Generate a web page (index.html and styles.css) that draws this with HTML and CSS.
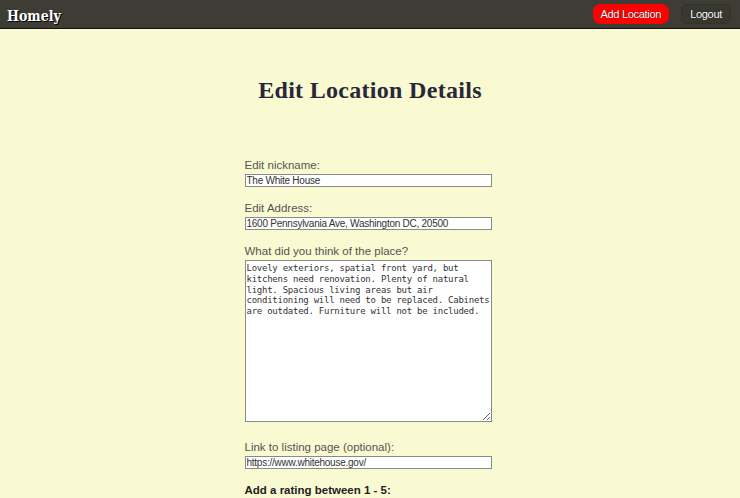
FILE: index.html
```html
<!DOCTYPE html>
<html>
<head>
<meta charset="utf-8">
<link rel="stylesheet" href="styles.css">
</head>
<body>
<header class="topbar">
  <div class="brand">Homely</div>
  <nav class="actions">
    <a class="btn btn-add">Add Location</a>
    <a class="btn btn-logout">Logout</a>
  </nav>
</header>
<main class="page">
  <h1 class="title">Edit Location Details</h1>
  <form class="form">
    <div class="field">
      <label class="label">Edit nickname:</label>
      <input class="input" type="text" value="The White House">
    </div>
    <div class="field">
      <label class="label">Edit Address:</label>
      <input class="input" type="text" value="1600 Pennsylvania Ave, Washington DC, 20500">
    </div>
    <div class="field">
      <label class="label">What did you think of the place?</label>
      <textarea class="textarea">Lovely exteriors, spatial front yard, but kitchens need renovation. Plenty of natural light. Spacious living areas but air conditioning will need to be replaced. Cabinets are outdated. Furniture will not be included.</textarea>
    </div>
    <div class="field">
      <label class="label">Link to listing page (optional):</label>
      <input class="input" type="text" value="https://www.whitehouse.gov/">
    </div>
    <div class="field">
      <label class="label label-bold">Add a rating between 1 - 5:</label>
    </div>
  </form>
</main>
</body>
</html>
```
FILE: styles.css
```css
html, body {
  margin: 0;
  padding: 0;
}
body {
  background: #f9f9d2;
  font-family: "Liberation Sans", Arial, sans-serif;
}
.topbar {
  height: 28px;
  background: #3e3d35;
  border-bottom: 1px solid #111;
  display: flex;
  align-items: center;
  justify-content: space-between;
  padding: 0 9px 0 7px;
}
.brand {
  font-family: "DejaVu Serif", serif;
  font-stretch: condensed;
  font-weight: bold;
  font-size: 14px;
  color: #fff;
  text-shadow: 1px 1px 0 #000;
  padding-top: 4px;
}
.actions {
  display: flex;
  gap: 12px;
  align-items: center;
}
.btn {
  font-size: 11px;
  letter-spacing: -0.3px;
  color: #fff;
  height: 20px;
  line-height: 20px;
  padding: 0 8px;
  border-radius: 8px;
  text-shadow: 0 0 1px #000;
}
.btn-add {
  background: #ff0000;
}
.btn-logout {
  background: #393830;
  border: 1px solid #33322b;
  height: 18px;
  line-height: 18px;
  border-radius: 6px;
}
.page {
  display: flex;
  flex-direction: column;
  align-items: center;
}
.title {
  font-family: "Liberation Serif", serif;
  font-weight: bold;
  font-size: 24px;
  color: #28283a;
  margin: 48px 0 0 0;
  letter-spacing: 0.3px;
}
.form {
  width: 247px;
  margin-top: 55px;
  margin-left: -4px;
  display: flex;
  flex-direction: column;
  gap: 15px;
}
.field {
  display: flex;
  flex-direction: column;
}
.label {
  font-size: 11.5px;
  color: #555;
  line-height: 13px;
  margin-bottom: 2px;
}
.label-bold {
  font-weight: bold;
  color: #222;
}
.input {
  box-sizing: border-box;
  width: 247px;
  height: 13px;
  font-family: "Liberation Sans", Arial, sans-serif;
  font-size: 10px;
  letter-spacing: -0.25px;
  color: #333;
  padding: 0 1px;
  border: 1px solid #8a8a8a;
  background: #fff;
  margin: 0;
}
.textarea {
  box-sizing: border-box;
  width: 247px;
  height: 162px;
  font-family: "DejaVu Sans Mono", monospace;
  font-size: 9px;
  letter-spacing: -0.25px;
  line-height: 10.8px;
  color: #333;
  padding: 2px 1px;
  border: 1px solid #8a8a8a;
  background: #fff;
  margin: 0 0 4px 0;
}
```
